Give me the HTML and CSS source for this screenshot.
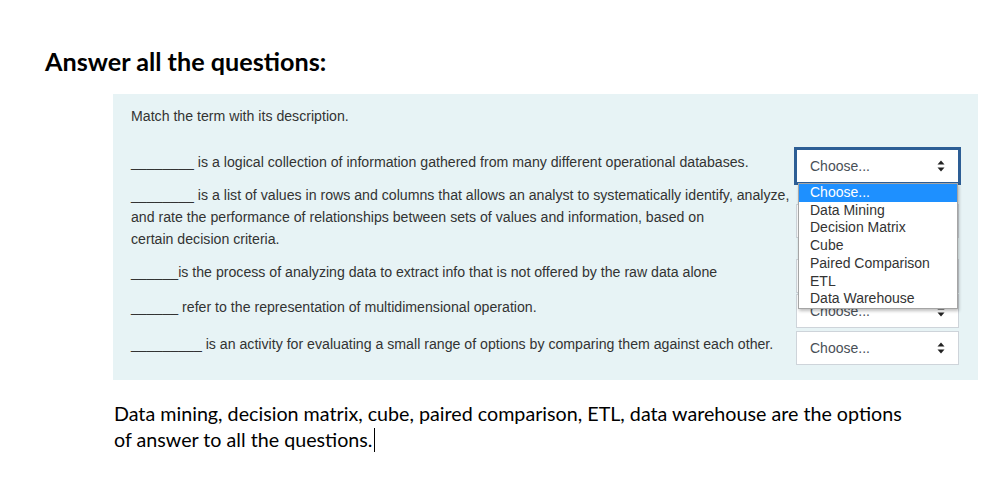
FILE: index.html
```html
<!DOCTYPE html>
<html lang="en">
<head>
    <meta charset="UTF-8">
    <title>Answer all the questions</title>
    <link rel="stylesheet" href="styles.css">
</head>
<body>
    <h1 class="title">Answer all the questions:</h1>

    <div class="question">
        <p class="prompt">Match the term with its description.</p>

        <div class="rows">
            <div class="row">
                <p class="stem">________ is a logical collection of information gathered from many different operational databases.</p>
                <div class="select-wrap">
                    <div class="select focused">
                        <span>Choose...</span>
                        <svg class="arrows" width="8" height="12" viewBox="0 0 8 12"><path d="M4 0.5 L7.5 4.5 H0.5 Z M4 11.5 L7.5 7.5 H0.5 Z" fill="#222"/></svg>
                    </div>
                    <ul class="dropdown">
                        <li class="active">Choose...</li>
                        <li>Data Mining</li>
                        <li>Decision Matrix</li>
                        <li>Cube</li>
                        <li>Paired Comparison</li>
                        <li>ETL</li>
                        <li>Data Warehouse</li>
                    </ul>
                </div>
            </div>

            <div class="row">
                <p class="stem">________ is a list of values in rows and columns that allows an analyst to systematically identify, analyze,<br>and rate the performance of relationships between sets of values and information, based on<br>certain decision criteria.</p>
                <div class="select-wrap">
                    <div class="select">
                        <span>Choose...</span>
                        <svg class="arrows" width="8" height="12" viewBox="0 0 8 12"><path d="M4 0.5 L7.5 4.5 H0.5 Z M4 11.5 L7.5 7.5 H0.5 Z" fill="#222"/></svg>
                    </div>
                </div>
            </div>

            <div class="row">
                <p class="stem">______is the process of analyzing data to extract info that is not offered by the raw data alone</p>
                <div class="select-wrap">
                    <div class="select">
                        <span>Choose...</span>
                        <svg class="arrows" width="8" height="12" viewBox="0 0 8 12"><path d="M4 0.5 L7.5 4.5 H0.5 Z M4 11.5 L7.5 7.5 H0.5 Z" fill="#222"/></svg>
                    </div>
                </div>
            </div>

            <div class="row">
                <p class="stem">______ refer to the representation of multidimensional operation.</p>
                <div class="select-wrap">
                    <div class="select">
                        <span>Choose...</span>
                        <svg class="arrows" width="8" height="12" viewBox="0 0 8 12"><path d="M4 0.5 L7.5 4.5 H0.5 Z M4 11.5 L7.5 7.5 H0.5 Z" fill="#222"/></svg>
                    </div>
                </div>
            </div>

            <div class="row last">
                <p class="stem">_________ is an activity for evaluating a small range of options by comparing them against each other.</p>
                <div class="select-wrap">
                    <div class="select">
                        <span>Choose...</span>
                        <svg class="arrows" width="8" height="12" viewBox="0 0 8 12"><path d="M4 0.5 L7.5 4.5 H0.5 Z M4 11.5 L7.5 7.5 H0.5 Z" fill="#222"/></svg>
                    </div>
                </div>
            </div>
        </div>
    </div>

    <p class="note">Data mining, decision matrix, cube, paired comparison, ETL, data warehouse are the options<br>of answer to all the questions.<span class="caret"></span></p>
</body>
</html>
```

FILE: styles.css
```css
* {
    margin: 0;
    padding: 0;
    box-sizing: border-box;
}

body {
    background: #fff;
    font-family: 'Liberation Sans', Arial, sans-serif;
    color: #000;
}

.title {
    font-family: Lato, 'Open Sans', sans-serif;
    font-weight: 700;
    font-size: 25.2px;
    line-height: 30px;
    padding: 46px 0 0 45px;
    color: #000;
}

.question {
    margin: 18px 22px 0 113px;
    background: #e7f3f5;
    padding: 11px 18px 15px 18px;
    font-size: 14.15px;
    line-height: 22px;
    color: #333;
}

.prompt {
    margin-bottom: 22px;
}

.rows {
    display: flex;
    flex-direction: column;
    gap: 1px;
}

.row {
    display: flex;
    align-items: center;
}

.row.last {
    margin-top: 2px;
}

.stem {
    flex: 1;
    margin-bottom: 8px;
    white-space: nowrap;
}

.select-wrap {
    position: relative;
    width: 163px;
    margin-right: 1px;
}

.select {
    height: 34px;
    background: #fff;
    border: 1px solid #ced4da;
    display: flex;
    align-items: center;
    justify-content: space-between;
    padding: 0 13px 0 13px;
    font-size: 14px;
    color: #495057;
}

.select.focused {
    border-color: #2d5e95;
    box-shadow: 0 0 0 2px #2d5e95;
}

.arrows {
    display: block;
}

.dropdown {
    position: absolute;
    top: 34px;
    left: 2px;
    width: 160px;
    list-style: none;
    background: #fff;
    border: 1px solid #a5a5a5;
    box-shadow: 1px 2px 3px rgba(0, 0, 0, 0.25);
    font-size: 14px;
    line-height: 17.7px;
    color: #333;
    z-index: 5;
}

.dropdown li {
    padding-left: 11px;
}

.dropdown li.active {
    background: #1e90ff;
    color: #fff;
}

.note {
    font-family: Lato, 'Open Sans', sans-serif;
    font-size: 19.7px;
    line-height: 26px;
    margin: 21px 0 0 114px;
    color: #000;
}

.caret {
    display: inline-block;
    width: 1px;
    height: 24px;
    background: #000;
    vertical-align: -5px;
    margin-left: 1px;
}
```
